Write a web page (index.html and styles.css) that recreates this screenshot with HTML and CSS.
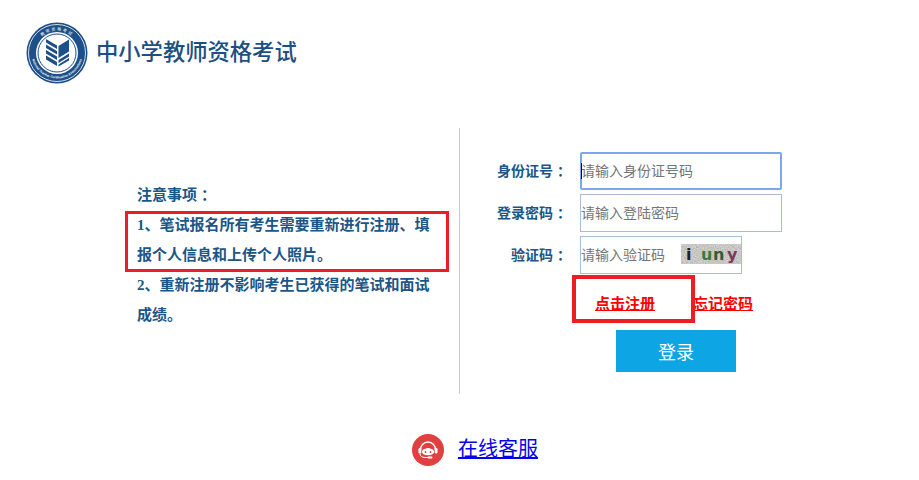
FILE: index.html
```html
<!DOCTYPE html>
<html lang="zh-CN">
<head>
    <meta charset="UTF-8">
    <meta name="viewport" content="width=device-width, initial-scale=1.0">
    <title>中小学教师资格考试</title>
    <link rel="stylesheet" href="styles.css">
</head>
<body>
    <div class="header">
        <svg class="logo" viewBox="0 0 62 62" width="62" height="62">
            <defs>
                <path id="arcTop" d="M8.500 31a22.500 22.500 0 0 1 45 0"></path>
                <path id="arcBottom" d="M5.500 31a25.500 25.500 0 0 0 51 0"></path>
            </defs>
            <circle cx="31" cy="31" r="30.500" fill="#1d4f88"></circle>
            <circle cx="31" cy="31" r="28.500" fill="none" stroke="#fff" stroke-width=".8"></circle>
            <circle cx="31" cy="31" r="21" fill="#fff"></circle>
            <circle cx="31" cy="31" r="19" fill="none" stroke="#1d4f88" stroke-width="1"></circle>
            <text class="ring-cn"><textPath href="#arcTop" startOffset="50%" text-anchor="middle">教师资格考试</textPath></text>
            <text class="ring-en"><textPath href="#arcBottom" startOffset="50%" text-anchor="middle">National Teacher Certification Examinations</textPath></text>
            <path fill="#1d4f88" d="M20 17l11 6.500v3.500l-11-6.500zM20 22.500l11 6.500v3.500l-11-6.500zM20 28l11 6.500v3.500l-11-6.500zM20 33.500l11 6.500v4l-11-6.500zM32.500 24l10.500-6.500v12l-10.500 6.500zM32.500 38l10.500-6.500v3l-10.500 6.500zM32.500 42.500l10.500-6.500v2.500l-10.500 6z"></path>
        </svg>
        <div class="site-name">中小学教师资格考试</div>
    </div>

    <div class="main">
        <div class="notes">
            <p class="notes-title">注意事项<span class="colon">：</span></p>
            <div class="notes-first">
                <p>1、笔试报名所有考生需要重新进行注册、填报个人信息和上传个人照片。</p>
                <div class="mark mark-notes"></div>
            </div>
            <p>2、重新注册不影响考生已获得的笔试和面试成绩。</p>
        </div>
        <form class="login">
            <div class="row">
                <label for="idNo">身份证号<span class="colon">：</span></label>
                <input type="text" id="idNo" class="field field-active" placeholder="请输入身份证号码">
                <span class="caret"></span>
            </div>
            <div class="row">
                <label for="pwd">登录密码<span class="colon">：</span></label>
                <input type="password" id="pwd" class="field" placeholder="请输入登陆密码">
            </div>
            <div class="row">
                <label for="code">验证码<span class="colon">：</span></label>
                <div class="code-box">
                    <input type="text" id="code" class="code-input" placeholder="请输入验证码">
                    <svg class="captcha" viewBox="0 0 60 20" width="60" height="20">
                        <filter id="noise"><feTurbulence type="fractalNoise" baseFrequency=".9" numOctaves="2" seed="4"></feTurbulence><feColorMatrix type="saturate" values=".25"></feColorMatrix><feComponentTransfer><feFuncA type="linear" slope="0" intercept="1"></feFuncA></feComponentTransfer></filter>
                        <rect width="60" height="20" filter="url(#noise)"></rect>
                        <rect width="60" height="20" fill="#d8d4d0" opacity=".45"></rect>
                        <text x="5" y="16" class="cap cap-i">i</text>
                        <text x="20" y="16" class="cap cap-u">u</text>
                        <text x="32" y="16" class="cap cap-n">n</text>
                        <text x="46" y="16" class="cap cap-y">y</text>
                    </svg>
                </div>
            </div>
            <div class="links">
                <a href="#">点击注册</a>
                <a href="#">忘记密码</a>
                <div class="mark mark-link"></div>
            </div>
            <button type="button" class="btn-login">登录</button>
        </form>
    </div>

    <div class="service">
        <svg class="service-icon" viewBox="0 0 32 32" width="32" height="32">
            <circle cx="16" cy="16" r="16" fill="#e0403f"></circle>
            <path fill="none" stroke="#fff" stroke-width="1.400" d="M8.500 16c0-4.500 3.300-8 7.500-8s7.500 3.500 7.500 8"></path>
            <rect x="6.500" y="14" width="2.800" height="5.500" rx="1.300" fill="#fff"></rect>
            <rect x="22.700" y="14" width="2.800" height="5.500" rx="1.300" fill="#fff"></rect>
            <path fill="#fff" d="M10 18c0-2 1.800-3.200 3.500-3.200.8-1 4.200-1 5 0 1.700 0 3.500 1.200 3.500 3.200s-2 3.200-6 3.200-6-1.200-6-3.200z"></path>
            <circle cx="13.500" cy="18" r=".9" fill="#e0403f"></circle>
            <circle cx="18.500" cy="18" r=".9" fill="#e0403f"></circle>
            <path fill="none" stroke="#fff" stroke-width="1" d="M8 19.500c0 2.500 2 4 5 4h3"></path>
            <rect x="15.500" y="22.500" width="5" height="2" rx="1" fill="#fff"></rect>
        </svg>
        <a href="#">在线客服</a>
    </div>
</body>
</html>
```

FILE: styles.css
```css
body {
    margin: 0;
    font-family: "Liberation Serif", "Noto Sans CJK SC", serif;
    background-color: #fff;
}

p {
    margin: 0;
}

.header {
    display: flex;
    align-items: flex-start;
    height: 106px;
    padding: 22px 0 0 26px;
}

.logo {
    display: block;
}

.ring-cn {
    font-family: "Noto Sans CJK SC", sans-serif;
    font-size: 4px;
    letter-spacing: 1.500px;
    fill: #fff;
}

.ring-en {
    font-family: "Liberation Sans", sans-serif;
    font-size: 3.200px;
    font-weight: bold;
    fill: #fff;
}

.site-name {
    margin: 11px 0 0 8px;
    font-family: "Noto Sans CJK SC", sans-serif;
    font-size: 22.300px;
    font-weight: 500;
    line-height: 34px;
    color: #1d4f83;
}

.main {
    display: flex;
    height: 266px;
    padding-left: 137px;
}

.notes {
    width: 300px;
    margin-right: 22px;
    padding-top: 52px;
    font-family: "Liberation Serif", "Noto Sans CJK SC", serif;
    font-size: 15px;
    font-weight: bold;
    line-height: 30px;
    color: #1a5687;
}

.colon {
    margin-left: 4px;
    font-family: "Noto Sans CJK TC", sans-serif;
    line-height: 0;
}

.notes-first {
    position: relative;
}

.mark {
    position: absolute;
    box-sizing: border-box;
    border: 3px solid #ee1c25;
}

.mark-notes {
    left: -12px;
    top: 1px;
    width: 324px;
    height: 61px;
}

.mark-link {
    left: 112px;
    top: -3px;
    width: 123px;
    height: 48px;
    border-width: 4px;
}

.login {
    display: flex;
    flex-direction: column;
    gap: 4px;
    width: 400px;
    padding-top: 24px;
    border-left: 1px solid #ccc;
    box-sizing: border-box;
}

.row {
    position: relative;
    display: flex;
    align-items: center;
    height: 38px;
}

.row label {
    width: 111px;
    margin: 0 9px 2px 0;
    font-family: "Noto Sans CJK SC", sans-serif;
    font-size: 14px;
    font-weight: bold;
    text-align: right;
    color: #1a5687;
}

.field {
    box-sizing: border-box;
    width: 202px;
    height: 38px;
    padding: 0 0 2px 0;
    border: 1px solid #a9bdd3;
    outline: none;
    font-family: "Noto Sans CJK SC", sans-serif;
    font-size: 14px;
}

.field-active {
    border: 2px solid #7ba7ee;
    border-radius: 2px;
    padding-left: 0;
    text-indent: -1px;
}

.caret {
    position: absolute;
    left: 121px;
    top: 11px;
    width: 1px;
    height: 16px;
    background-color: #000;
}

.code-box {
    box-sizing: border-box;
    display: flex;
    align-items: center;
    width: 162px;
    height: 38px;
    border: 1px solid #a9bdd3;
}

.code-input {
    width: 100px;
    padding: 0 0 2px 0;
    border: none;
    outline: none;
    font-family: "Noto Sans CJK SC", sans-serif;
    font-size: 14px;
}

.captcha {
    display: block;
    margin-bottom: 2px;
}

.cap {
    font-family: "DejaVu Sans", sans-serif;
    font-size: 16px;
    font-weight: bold;
}

.cap-i {
    fill: #2b1c2e;
}

.cap-u {
    fill: #3d7a3a;
}

.cap-n {
    fill: #2f5f35;
}

.cap-y {
    fill: #7c3a55;
}

.links {
    position: relative;
    display: flex;
    gap: 38px;
    height: 48px;
    padding-left: 135px;
    line-height: 50px;
}

.links a {
    font-family: "Noto Sans CJK SC", sans-serif;
    font-size: 15px;
    font-weight: bold;
    color: #f00;
}

.btn-login {
    width: 120px;
    height: 42px;
    margin-left: 156px;
    padding: 0;
    border: none;
    background-color: #0ea5e4;
    color: #fff;
    font-family: "Noto Sans CJK SC", sans-serif;
    font-size: 18px;
}

.service {
    display: flex;
    align-items: center;
    gap: 14px;
    margin-top: 40px;
    padding-left: 412px;
}

.service-icon {
    display: block;
}

.service a {
    font-family: "Noto Sans CJK SC", sans-serif;
    font-size: 20px;
    line-height: 28px;
    margin-bottom: 4px;
    color: #00e;
}
```
